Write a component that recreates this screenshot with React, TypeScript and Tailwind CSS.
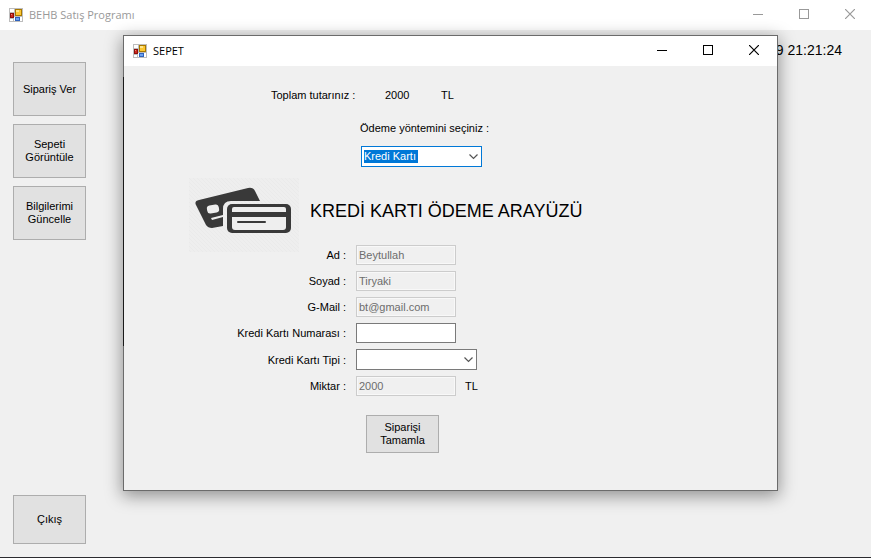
import type { ReactNode } from "react";

const uiFont = "font-['Liberation_Sans',Arial,sans-serif]";

function AppIcon() {
  return (
    <svg className="size-[14px] shrink-0" viewBox="0 0 14 14" aria-hidden="true" shapeRendering="crispEdges">
      <rect width="14" height="14" fill="#bdbdbd" />
      <rect x="1" y="1" width="4" height="3" fill="#fff" />
      <rect x="1" y="11" width="3" height="2" fill="#fff" />
      <rect x="5" y="9" width="8" height="4" fill="#fff" />
      <rect x="1" y="5" width="4" height="5" fill="#8e0f0b" />
      <rect x="2" y="6" width="2" height="3" fill="#cf2a1e" />
      <rect x="2" y="6" width="1" height="1" fill="#f0877c" />
      <rect x="6" y="1" width="7" height="7" fill="#a87800" />
      <rect x="7" y="2" width="5" height="5" fill="#fbc733" />
      <rect x="7" y="2" width="3" height="2" fill="#fee58d" />
      <rect x="6" y="9" width="5" height="4" fill="#2f62bd" />
      <rect x="7" y="10" width="3" height="2" fill="#6ea2ee" />
    </svg>
  );
}

function CaptionButton({ label, children }: { label: string; children: ReactNode }) {
  return (
    <button type="button" aria-label={label} className="flex h-7 w-10 items-center justify-center">
      <svg className="size-[10px]" viewBox="0 0 10 10" fill="none" stroke="currentColor" aria-hidden="true">
        {children}
      </svg>
    </button>
  );
}

function TitleBar({ title, tone, inset }: { title: string; tone: string; inset: string }) {
  return (
    <header className={`flex h-[30px] items-center bg-white pl-[9px] ${tone} ${inset}`}>
      <AppIcon />
      <h1 className="ml-1.5 flex-1 font-['Open_Sans','Noto_Sans',sans-serif] text-[11px] leading-4">{title}</h1>
      <div className="flex gap-1.5 self-start">
        <CaptionButton label="Simge durumuna küçült">
          <path d="M0 5.500h10" shapeRendering="crispEdges" />
        </CaptionButton>
        <CaptionButton label="Ekranı kapla">
          <path d="M0.5 0.5h9v9h-9z" shapeRendering="crispEdges" />
        </CaptionButton>
        <CaptionButton label="Kapat">
          <path d="M0 0l10 10M10 0l-10 10" strokeWidth="1.2" />
        </CaptionButton>
      </div>
    </header>
  );
}

function PushButton({ size, children }: { size: string; children: ReactNode }) {
  return (
    <button
      type="button"
      className={`w-[73px] border border-[#adadad] bg-[#e1e1e1] text-center leading-[13px] text-black ${size}`}
    >
      {children}
    </button>
  );
}

function Chevron() {
  return (
    <svg
      className="pointer-events-none absolute top-[7px] right-1 h-[7px] w-[9px]"
      viewBox="0 0 9 7"
      fill="none"
      stroke="#555"
      strokeWidth="1.2"
      aria-hidden="true"
    >
      <path d="M0.5 1.5l4 4 4-4" />
    </svg>
  );
}

function TextRow({ id, label, value, suffix }: { id: string; label: string; value?: string; suffix?: string }) {
  return (
    <>
      <label htmlFor={id} className="text-right">
        {label}
      </label>
      <div className="flex items-center gap-[9px]">
        <input
          id={id}
          type="text"
          defaultValue={value}
          disabled={value !== undefined}
          className="h-5 w-[100px] border border-[#7a7a7a] bg-white px-0.5 text-black disabled:border-[#cccccc] disabled:bg-[#f0f0f0] disabled:text-[#6d6d6d] disabled:shadow-[inset_0_0_0_1px_#f8f8f8]"
        />
        {suffix && <span>{suffix}</span>}
      </div>
    </>
  );
}

function CardsPicture() {
  return (
    <svg className="-mb-2 h-[74px] w-[110px] shrink-0" viewBox="0 0 110 74" role="img" aria-label="Kredi kartları">
      <defs>
        <pattern id="hatch" width="4" height="4" patternUnits="userSpaceOnUse">
          <path d="M-1 3l2 2M0 0l4 4M3 -1l2 2" stroke="#eaeaea" strokeWidth="1" />
        </pattern>
      </defs>
      <rect width="110" height="74" fill="#eeeeee" />
      <rect width="110" height="74" fill="url(#hatch)" />
      <path
        d="M10 22L59 10q5-1 7 3l5 10H42q-8 0-8 8v17l-11 2q-4 0-6-3L7 27q-2-4 3-5z"
        fill="#393939"
      />
      <rect x="18" y="27" width="12" height="8" rx="3" fill="#eee" transform="rotate(-10 24 31)" />
      <path d="M22 40l12-3v2l-11 3z" fill="#eee" />
      <rect x="38" y="26" width="64" height="29" rx="5" fill="#393939" />
      <path d="M45 29h50q2 0 2 2v3H43v-3q0-2 2-2z" fill="#eee" />
      <path d="M43 39h54v10q0 3-3 3H46q-3 0-3-3z" fill="#eee" />
      <path d="M49 44h27" stroke="#393939" strokeWidth="2" strokeLinecap="round" />
    </svg>
  );
}

function BasketWindow() {
  return (
    <section className="absolute top-[35px] right-[93px] left-[123px] border border-[#6b6b6b] bg-[#f0f0f0] shadow-[0_4px_16px_1px_rgba(0,0,0,0.4)]">
      <span className="absolute top-[41px] -left-px h-[269px] w-px bg-[#1a1a1a]" />
      <TitleBar title="SEPET" tone="text-black" inset="pr-[3px]" />
      <form className="flex flex-col pt-[21px] pb-[37px]">
        <div className="flex pl-[147px] leading-4">
          <span className="w-[114px]">Toplam tutarınız :</span>
          <span className="w-14">2000</span>
          <span>TL</span>
        </div>
        <div className="flex flex-col items-start gap-2.5 pt-[17px] pl-[236px]">
          <label htmlFor="method" className="leading-4">
            Ödeme yöntemini seçiniz :
          </label>
          <div className="relative ml-px">
            <select
              id="method"
              defaultValue="kart"
              className="block h-[21px] w-[121px] appearance-none border border-[#0078d7] bg-white bg-[linear-gradient(#0078d7,#0078d7)] bg-[length:54px_13px] bg-[position:2px_3px] bg-no-repeat px-0.5 text-white outline-none"
            >
              <option value="kart" className="text-black">
                Kredi Kartı
              </option>
            </select>
            <Chevron />
          </div>
        </div>
        <div className="flex items-center gap-[11px] pt-[11px] pb-px pl-[65px]">
          <CardsPicture />
          <h2 className="text-[18px] leading-6 text-black">KREDİ KARTI ÖDEME ARAYÜZÜ</h2>
        </div>
        <div className="grid grid-cols-[222px_1fr] items-center gap-x-2.5 gap-y-1.5 leading-4">
          <TextRow id="name" label="Ad :" value="Beytullah" />
          <TextRow id="surname" label="Soyad :" value="Tiryaki" />
          <TextRow id="mail" label="G-Mail :" value="bt@gmail.com" />
          <TextRow id="number" label="Kredi Kartı Numarası :" />
          <label htmlFor="type" className="text-right">
            Kredi Kartı Tipi :
          </label>
          <div className="relative w-[121px]">
            <select
              id="type"
              defaultValue=""
              className="block h-[21px] w-full appearance-none border border-[#7a7a7a] bg-white px-0.5 text-black"
            >
              <option value=""></option>
            </select>
            <Chevron />
          </div>
          <TextRow id="amount" label="Miktar :" value="2000" suffix="TL" />
        </div>
        <div className="pt-[19px] pl-[242px]">
          <PushButton size="h-[38px]">
            Siparişi
            <br />
            Tamamla
          </PushButton>
        </div>
      </form>
    </section>
  );
}

export default function App() {
  return (
    <div
      className={`relative flex min-h-screen flex-col overflow-hidden border-b border-[#2b2b2f] bg-[#f0f0f0] text-[11px] text-black ${uiFont}`}
    >
      <TitleBar title="BEHB Satış Programı" tone="text-[#999999]" inset="pr-px" />
      <main className="flex flex-1 justify-between pt-3 pr-[29px] pb-[13px] pl-[13px]">
        <nav className="flex flex-col gap-2 pt-5">
          <PushButton size="h-[54px]">Sipariş Ver</PushButton>
          <PushButton size="h-[54px]">
            Sepeti
            <br />
            Görüntüle
          </PushButton>
          <PushButton size="h-[54px]">
            Bilgilerimi
            <br />
            Güncelle
          </PushButton>
          <PushButton size="mt-auto h-[49px]">Çıkış</PushButton>
        </nav>
        <time className="text-[14px] leading-4">9 21:21:24</time>
      </main>
      <BasketWindow />
    </div>
  );
}
